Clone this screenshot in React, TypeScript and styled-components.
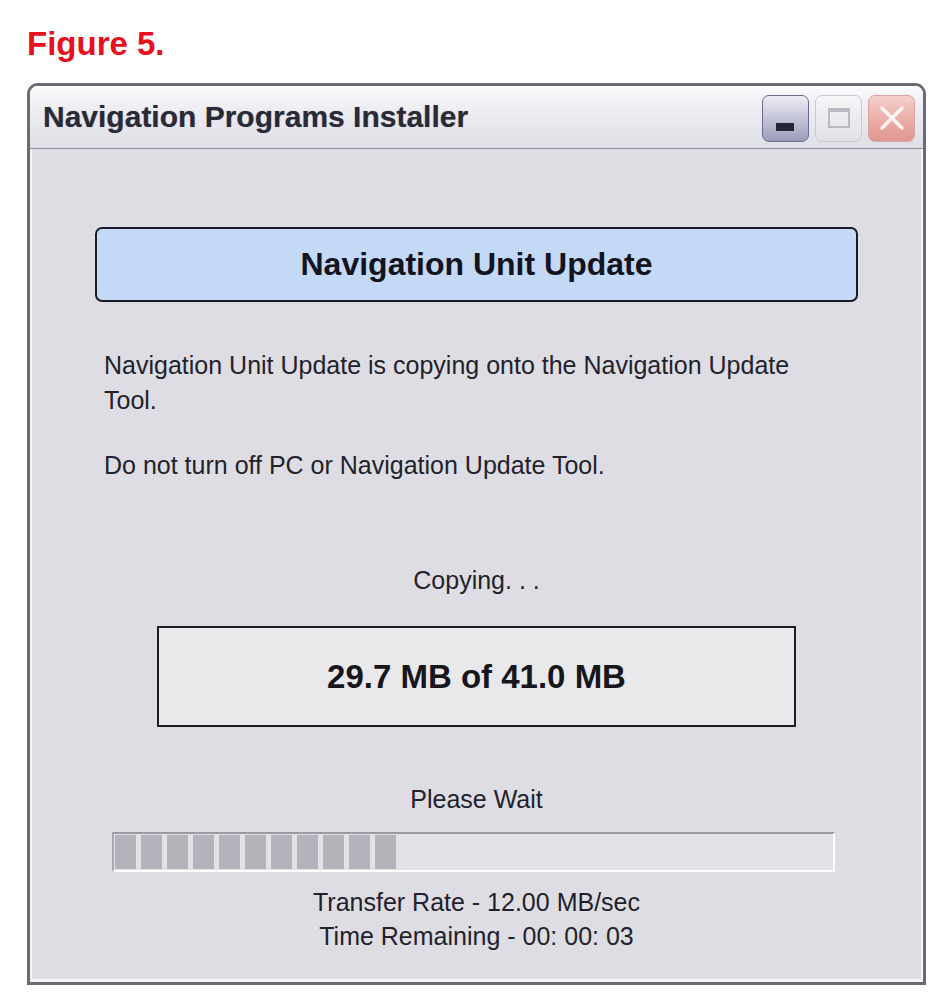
import React from "react";
import styled, { createGlobalStyle } from "styled-components";

const GlobalStyle = createGlobalStyle`
  body {
    margin: 0;
    background: #ffffff;
    font-family: "Liberation Sans", Arial, sans-serif;
  }
`;

const Page = styled.div`
  padding: 28px 0 0 27px;
`;

const FigureLabel = styled.div`
  color: #e8101c;
  font-size: 33px;
  line-height: 32px;
  font-weight: bold;
`;

const Window = styled.div`
  width: 893px;
  height: 896px;
  margin-top: 23px;
  border: 3px solid #6b6b74;
  border-radius: 11px 11px 0 0;
  display: flex;
  flex-direction: column;
  overflow: hidden;
`;

const TitleBar = styled.div`
  height: 62px;
  flex-shrink: 0;
  display: flex;
  align-items: center;
  justify-content: space-between;
  padding: 0 8px 0 13px;
  background: linear-gradient(#fbfbfd 0%, #eeeef3 35%, #dedee6 100%);
  border-bottom: 1px solid #8e8e98;
  box-shadow: inset 0 2px 0 #ffffff;
`;

const Title = styled.div`
  font-size: 30px;
  font-weight: bold;
  color: #2a2a36;
  text-shadow: 0 0 1px rgba(40, 40, 60, 0.4);
`;

const Controls = styled.div`
  display: flex;
  gap: 6px;
  padding-top: 2px;
`;

const CtlButton = styled.div<{ $kind: "min" | "max" | "close" }>`
  width: 47px;
  height: 47px;
  box-sizing: border-box;
  border-radius: 7px;
  position: relative;
  display: flex;
  align-items: center;
  justify-content: center;
  border: 1px solid
    ${(p) =>
      p.$kind === "min" ? "#6a6a8c" : p.$kind === "close" ? "#d9a4a4" : "#c9c9d2"};
  background: ${(p) =>
    p.$kind === "min"
      ? "linear-gradient(#eeeef6, #b4b4cc 70%, #9c9cba)"
      : p.$kind === "close"
      ? "linear-gradient(#f6cfcc, #e8a49c 70%, #e09890)"
      : "linear-gradient(#f6f6f8, #e0e0e6)"};
`;

const MinDash = styled.div`
  position: absolute;
  left: 13px;
  top: 27px;
  width: 18px;
  height: 8px;
  background: #262634;
`;

const MaxBox = styled.div`
  width: 22px;
  height: 20px;
  border: 2px solid #b9b9c2;
  border-top-width: 4px;
  box-sizing: border-box;
`;

const Content = styled.div`
  flex: 1;
  background: #dedde3;
  box-shadow: inset 2px 0 0 #f6f6f8, inset -2px 0 0 #f6f6f8,
    inset 0 -3px 0 #f6f6f8;
  padding: 0 65px;
  display: flex;
  flex-direction: column;
`;

const HeaderBox = styled.div`
  margin-top: 78px;
  height: 75px;
  box-sizing: border-box;
  border: 2px solid #1b1b28;
  border-radius: 7px;
  background: #c3d9f5;
  display: flex;
  align-items: center;
  justify-content: center;
  font-size: 32px;
  font-weight: bold;
  color: #141420;
`;

const Para = styled.p<{ $gap: number }>`
  margin: ${(p) => p.$gap}px 0 0;
  padding-left: 9px;
  max-width: 700px;
  font-size: 25px;
  line-height: 35px;
  color: #22222c;
`;

const Centered = styled.div<{ $gap: number }>`
  margin-top: ${(p) => p.$gap}px;
  text-align: center;
  font-size: 25px;
  line-height: 34px;
  color: #22222c;
`;

const CountBox = styled.div`
  margin: 29px auto 0;
  width: 639px;
  height: 101px;
  box-sizing: border-box;
  border: 2px solid #1c1c24;
  background: #e9e9eb;
  display: flex;
  align-items: center;
  justify-content: center;
  font-size: 33px;
  font-weight: bold;
  color: #16161c;
`;

const Progress = styled.div`
  margin: 16px 0 0 17px;
  width: 723px;
  height: 40px;
  box-sizing: border-box;
  border-top: 2px solid #9a9aa2;
  border-left: 2px solid #a8a8b0;
  border-bottom: 2px solid #fdfdfd;
  border-right: 2px solid #fdfdfd;
  background: #e2e2e6;
  display: flex;
  gap: 5px;
  padding: 1px 0 1px 1px;
`;

const Block = styled.div`
  width: 21px;
  background: #b3b3bc;
`;

const Stats = styled.div`
  margin-top: 13px;
  text-align: center;
  font-size: 25px;
  line-height: 34px;
  color: #22222c;
`;

export default function App() {
  const done = 11;
  return (
    <>
      <GlobalStyle />
      <Page>
        <FigureLabel>Figure 5.</FigureLabel>
        <Window>
          <TitleBar>
            <Title>Navigation Programs Installer</Title>
            <Controls>
              <CtlButton $kind="min">
                <MinDash />
              </CtlButton>
              <CtlButton $kind="max">
                <MaxBox />
              </CtlButton>
              <CtlButton $kind="close">
                <svg width="30" height="30" viewBox="0 0 30 30">
                  <path
                    d="M5 5 L25 25 M25 5 L5 25"
                    stroke="#fdf4f4"
                    strokeWidth="3.5"
                    strokeLinecap="round"
                  />
                </svg>
              </CtlButton>
            </Controls>
          </TitleBar>
          <Content>
            <HeaderBox>Navigation Unit Update</HeaderBox>
            <Para $gap={46}>
              Navigation Unit Update is copying onto the Navigation Update
              Tool.
            </Para>
            <Para $gap={30}>Do not turn off PC or Navigation Update Tool.</Para>
            <Centered $gap={80}>Copying. . .</Centered>
            <CountBox>29.7 MB of 41.0 MB</CountBox>
            <Centered $gap={55}>Please Wait</Centered>
            <Progress>
              {Array.from({ length: done }).map((_, i) => (
                <Block key={i} />
              ))}
            </Progress>
            <Stats>
              Transfer Rate - 12.00 MB/sec
              <br />
              Time Remaining - 00: 00: 03
            </Stats>
          </Content>
        </Window>
      </Page>
    </>
  );
}
